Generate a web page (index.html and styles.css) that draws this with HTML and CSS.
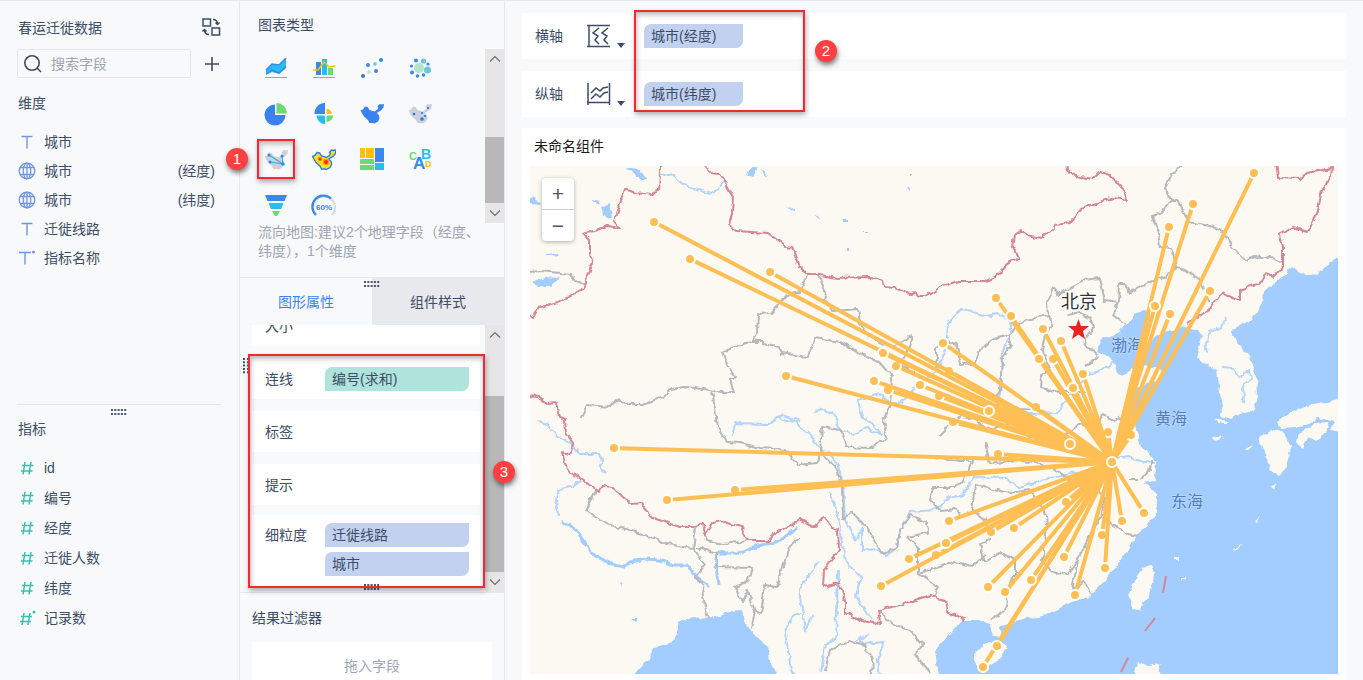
FILE: index.html
```html
<!DOCTYPE html>
<html lang="zh-CN">
<head>
<meta charset="utf-8">
<title>春运迁徙数据</title>
<link rel="stylesheet" href="styles.css">
</head>
<body>
<svg class="defs" aria-hidden="true">
  <symbol id="i-text" viewBox="0 0 18 18"><path d="M3.500 3.500h11M9 3.500v12" fill="none" stroke="#6f96e0" stroke-width="1.400"/></symbol>
  <symbol id="i-textstar" viewBox="0 0 18 18"><path d="M1 3.500h12M7 3.500v12" fill="none" stroke="#6f96e0" stroke-width="1.400"/><circle cx="15.500" cy="3" r="1.500" fill="#6f96e0"/></symbol>
  <symbol id="i-globe" viewBox="0 0 18 18"><g fill="none" stroke="#6f96e0" stroke-width="1.300"><circle cx="9" cy="9" r="7.800"/><ellipse cx="9" cy="9" rx="3.800" ry="7.800"/><path d="M9 1v16M2 5.500h14M2 12.500h14"/></g></symbol>
  <symbol id="i-hash" viewBox="0 0 18 18"><path d="M7 3 5 15.500M13 3l-2 12.500M4 6.500h11.500M3 12h11.500" fill="none" stroke="#3fbfae" stroke-width="1.500"/></symbol>
  <symbol id="i-hashstar" viewBox="0 0 18 18"><path d="M6 4 4 16M12 4l-2 12M3 7.500h11M2 12.500h11" fill="none" stroke="#3fbfae" stroke-width="1.500"/><circle cx="16" cy="3" r="1.500" fill="#3fbfae"/></symbol>
  <symbol id="i-grip" viewBox="0 0 16 6"><path d="M0 1h16M0 5h16" stroke="#4a5670" stroke-width="2" stroke-dasharray="2 1.300"/></symbol>
  <symbol id="i-up" viewBox="0 0 12 8"><path d="M1 6.500 6 1.500l5 5" fill="none" stroke="#6c6c6c" stroke-width="1.100"/></symbol>
  <symbol id="i-down" viewBox="0 0 12 8"><path d="M1 1.500 6 6.500l5-5" fill="none" stroke="#6c6c6c" stroke-width="1.100"/></symbol>
  <symbol id="i-china" viewBox="0 0 24 24"><path d="M0.500 8.500 3 7.500 5 4.500 7.500 5 9.500 8l5 1.500 3-2 1-2-1-1 2-2.500 2 .5L24 2l-.5 3.500-2.500 3-3 1.500-1 1 2 2.500.5 3-1.500 3-3.500 2-1.500-.5-3.500 0-1.500-3L4 14.500 2.500 12z"/></symbol>
</svg>
<div class="app">
  <aside class="fields">
    <header class="fields-head">
      <h1 class="title">春运迁徙数据</h1>
      <button class="plain" aria-label="切换数据"><svg width="20" height="20" viewBox="0 0 20 20" fill="none" stroke="#3d4d66" stroke-width="1.500"><path d="M2 1h7.500v7H2zM11 10h7.500v7H11zM12 1.500c3 0 4.500 1.500 4.500 5M14.500 4.500l2 2 2-2M8 16.500c-3 0-4.500-1.500-4.500-5M1.500 13.500l2-2 2 2"/></svg></button>
    </header>
    <div class="search-row">
      <label class="search"><svg width="20" height="20" viewBox="0 0 20 20" fill="none" stroke="#3d4d66" stroke-width="1.600"><circle cx="9" cy="9" r="7.200"/><path d="m14 14 4 4"/></svg><input type="text" placeholder="搜索字段" aria-label="搜索字段"></label>
      <button class="plain" aria-label="添加字段"><svg width="16" height="16" viewBox="0 0 16 16" stroke="#3d4d66" stroke-width="1.600"><path d="M1 8h14M8 1v14"/></svg></button>
    </div>
    <section class="dims">
      <h2 class="title">维度</h2>
      <ul class="list">
        <li><svg class="ic"><use href="#i-text"/></svg>城市</li>
        <li><svg class="ic"><use href="#i-globe"/></svg>城市<span class="geo">(经度)</span></li>
        <li><svg class="ic"><use href="#i-globe"/></svg>城市<span class="geo">(纬度)</span></li>
        <li><svg class="ic"><use href="#i-text"/></svg>迁徙线路</li>
        <li><svg class="ic"><use href="#i-textstar"/></svg>指标名称</li>
      </ul>
    </section>
    <section class="measures">
      <svg class="grip" width="16" height="6"><use href="#i-grip"/></svg>
      <h2 class="title">指标</h2>
      <ul class="list tall">
        <li><svg class="ic"><use href="#i-hash"/></svg>id</li>
        <li><svg class="ic"><use href="#i-hash"/></svg>编号</li>
        <li><svg class="ic"><use href="#i-hash"/></svg>经度</li>
        <li><svg class="ic"><use href="#i-hash"/></svg>迁徙人数</li>
        <li><svg class="ic"><use href="#i-hash"/></svg>纬度</li>
        <li><svg class="ic"><use href="#i-hashstar"/></svg>记录数</li>
      </ul>
    </section>
  </aside>

  <section class="config">
    <h2 class="title chart-title">图表类型</h2>
    <div class="types">
      <div class="type-grid">
        <button class="type" aria-label="面积图"><svg viewBox="0 0 24 24"><path d="M2 14 8 8l7 1 7-7v10l-7 6-7-2-6 3z" fill="#27bdf0"/><path d="M2 14 8 8l7 1 7-7M2 18l6-4 7 3 7-6" fill="none" stroke="#3b87ea" stroke-width="1.500"/><path d="M1 21.500h22" stroke="#9aa3b2"/></svg></button>
        <button class="type" aria-label="组合图"><svg viewBox="0 0 24 24"><path d="M4 6h5v13H4z" fill="#3b87ea"/><path d="M10 3h5v16h-5z" fill="#27bdf0"/><path d="M16 12h5v7h-5z" fill="#6bd975"/><path d="M1 14h5l6-8 5 5 6-1" fill="none" stroke="#ffc000" stroke-width="1.500"/><path d="M1 21.500h22" stroke="#9aa3b2"/></svg></button>
        <button class="type" aria-label="散点图"><svg viewBox="0 0 24 24"><circle cx="3" cy="20" r="2" fill="#4472c4"/><circle cx="8" cy="9" r="2" fill="#3b87ea"/><circle cx="9" cy="16" r="1.700" fill="#b1e5cb"/><circle cx="15" cy="8" r="1.800" fill="#70c5d5"/><circle cx="16" cy="15" r="2" fill="#3b87ea"/><circle cx="21" cy="4" r="2" fill="#1d8fe6"/></svg></button>
        <button class="type" aria-label="气泡图"><svg viewBox="0 0 24 24"><circle cx="11" cy="12" r="5" fill="#b1e5cb"/><g fill="#70c5d5"><circle cx="15.500" cy="5" r="2.600"/><circle cx="19.500" cy="14" r="3.500"/></g><g fill="#3b87ea"><circle cx="8" cy="4.500" r="2"/><circle cx="20" cy="8" r="1.600"/><circle cx="3.500" cy="10" r="1.600"/><circle cx="4" cy="16.500" r="2"/><circle cx="9.500" cy="20" r="1.800"/><circle cx="15.500" cy="19" r="1.800"/></g></svg></button>
        <button class="type" aria-label="饼图"><svg viewBox="0 0 24 24"><path d="M11 2.500V13h10.500A10.500 10.500 0 1 1 11 2.500z" fill="#3983f0"/><path d="M12.500 1v10.500H23A10.500 10.500 0 0 0 12.500 1z" fill="#6bd975"/></svg></button>
        <button class="type" aria-label="玫瑰图"><svg viewBox="0 0 24 24"><path d="M13 1v11H2.500A10.500 10.500 0 0 1 13 1z" fill="#3b87ea"/><path d="M14.500 7v5h5.500a5.500 5.500 0 0 0-5.500-5z" fill="#ffc000"/><path d="M13 13.500V22a9 9 0 0 1-8.500-8.500z" fill="#27bdf0"/><path d="M14.500 13.500V20a6.500 6.500 0 0 0 6.500-6.500z" fill="#6bd975"/></svg></button>
        <button class="type" aria-label="区域地图"><svg viewBox="0 0 24 24"><use href="#i-china" fill="#3983f0"/></svg></button>
        <button class="type" aria-label="点地图"><svg viewBox="0 0 24 24"><use href="#i-china" fill="#cbd0da"/><g fill="#2578e8"><circle cx="6" cy="12" r="1.300"/><circle cx="14" cy="11" r="1.100"/><circle cx="20" cy="6" r="1.100"/><circle cx="17" cy="14" r="1.100"/><circle cx="14" cy="17" r="1.700"/></g></svg></button>
        <button class="type picked" aria-label="流向地图"><svg viewBox="0 0 24 24"><use href="#i-china" fill="#cbd0da"/><path d="M5 7l14 9M6 14l13 2M18 8l1 8" fill="none" stroke="#27b7e6" stroke-width="1.200"/><g fill="#3b87ea"><circle cx="5" cy="7" r="1.500"/><circle cx="6" cy="14" r="1.500"/><circle cx="18" cy="8" r="1.500"/><circle cx="19" cy="16" r="1.800"/></g></svg><span class="mark mark-one"></span><span class="badge badge-one">1</span></button>
        <button class="type" aria-label="热力地图"><svg viewBox="0 0 24 24"><use href="#i-china" fill="#ffe11a" stroke="#2b80e8" stroke-width="1.400"/><circle cx="8" cy="11" r="2.400" fill="#ff9d00"/><circle cx="14" cy="14" r="3.200" fill="#ff9d00"/><circle cx="8" cy="11" r="1.300" fill="#f22"/><circle cx="14" cy="14" r="1.900" fill="#f22"/></svg></button>
        <button class="type" aria-label="矩形树图"><svg viewBox="0 0 24 24"><path d="M0 0h5v10H0zM6 0h8v10H6z" fill="#ffc000"/><path d="M15 0h9v14h-9z" fill="#3b87ea"/><path d="M0 11h14v5H0zM0 17h14v5H0z" fill="#6bd975"/><path d="M15 15h9v7h-9z" fill="#27bdf0"/></svg></button>
        <button class="type" aria-label="词云"><svg viewBox="0 0 24 24" font-family="Liberation Sans, sans-serif" font-weight="bold"><text x="1" y="12" font-size="11" fill="#6bd975">C</text><text x="13" y="11" font-size="14" fill="#27bdf0">B</text><text x="5" y="21" font-size="17" fill="#3b87ea">A</text><text x="17" y="19" font-size="9" fill="#ffc000">D</text></svg></button>
        <button class="type" aria-label="漏斗图"><svg viewBox="0 0 24 24"><path d="M1 1h22l-2.500 6h-17z" fill="#3b87ea"/><path d="M4.500 9h15L17 15H7z" fill="#27bdf0"/><path d="M8 17h8l-3 5h-2z" fill="#6bd975"/></svg></button>
        <button class="type" aria-label="仪表盘"><svg viewBox="0 0 24 24"><g fill="none" stroke-width="2.200"><path d="M4 21a11 11 0 1 1 16 0" stroke="#d9dce1"/><path d="M4 21A11 11 0 0 1 19 4.500" stroke="#3b87ea"/></g><text x="12" y="16" font-size="8" font-weight="bold" text-anchor="middle" fill="#3b87ea" font-family="Liberation Sans, sans-serif">60%</text></svg></button>
      </div>
      <div class="bar"><button aria-label="向上"><svg width="12" height="8"><use href="#i-up"/></svg></button><i class="space a"></i><i class="thumb b"></i><button aria-label="向下"><svg width="12" height="8"><use href="#i-down"/></svg></button></div>
    </div>
    <p class="hint">流向地图:建议2个地理字段（经度、纬度），1个维度</p>
    <div class="tabs" role="tablist">
      <button class="tab on" role="tab">图形属性</button><button class="tab" role="tab">组件样式</button>
      <svg class="tab-grip" width="16" height="6"><use href="#i-grip"/></svg>
    </div>
    <div class="props">
      <div class="prop-list">
        <div class="prop">大小</div>
        <div class="prop">连线<div class="chips"><span class="chip green">编号(求和)</span></div></div>
        <div class="prop">标签</div>
        <div class="prop">提示</div>
        <div class="prop fine">细粒度<div class="chips"><span class="chip">迁徙线路</span><span class="chip">城市</span></div></div>
      </div>
      <div class="bar"><button aria-label="向上"><svg width="12" height="8"><use href="#i-up"/></svg></button><i class="space c"></i><i class="thumb d"></i><button aria-label="向下"><svg width="12" height="8"><use href="#i-down"/></svg></button></div>
      <svg class="side-grip" width="6" height="16" viewBox="0 0 6 16"><path d="M1 0v16M5 0v16" stroke="#4a5670" stroke-width="2" stroke-dasharray="2 1.300"/></svg>
      <svg class="low-grip" width="16" height="6"><use href="#i-grip"/></svg>
      <span class="mark mark-three"></span><span class="badge badge-three">3</span>
    </div>
    <section class="filter">
      <h2 class="title">结果过滤器</h2>
      <div class="drop">拖入字段</div>
    </section>
  </section>

  <main class="stage">
    <div class="axes">
      <div class="axis">横轴<button class="plain axis-btn" aria-label="横轴设置"><svg width="40" height="24" viewBox="0 0 40 24"><path d="M0 1.500h23M0 22.500h23M2 1v22M12 4l-6 5 5 3-3 4 4 4M21 4l-6 5 5 3-3 4 4 4" fill="none" stroke="#3d4d66" stroke-width="1.500"/><path d="M30 19h8l-4 5z" fill="#3d4d66"/></svg></button><span class="chip">城市(经度)</span></div>
      <div class="axis">纵轴<button class="plain axis-btn" aria-label="纵轴设置"><svg width="40" height="24" viewBox="0 0 40 24"><path d="M1 1v22M22.500 1v22M0 20.500h23M4 11l5-5 4 3 3-3 5-1M4 17l5-5 4 3 4-4 4-1" fill="none" stroke="#3d4d66" stroke-width="1.500"/><path d="M30 19h8l-4 5z" fill="#3d4d66"/></svg></button><span class="chip">城市(纬度)</span></div>
      <span class="mark mark-two"></span><span class="badge badge-two">2</span>
    </div>
    <section class="card">
      <h2 class="card-title">未命名组件</h2>
      <div class="map">
        <svg class="canvas" viewBox="530 166 808 508" preserveAspectRatio="xMidYMid slice" role="img" aria-label="迁徙流向地图">
          <defs><filter id="rough" x="530" y="166" width="808" height="508" filterUnits="userSpaceOnUse"><feTurbulence type="fractalNoise" baseFrequency="0.130" numOctaves="2" seed="4"/><feDisplacementMap in="SourceGraphic" scale="6" xChannelSelector="R" yChannelSelector="G"/></filter></defs>
          <rect x="530" y="166" width="808" height="508" fill="#fcf9f2"/>
          <g filter="url(#rough)">
            <g fill="#a3ccff">
              <path d="M1350 250 1338 257 1327 265 1318 274 1307 275 1298 271 1292 266 1288 273 1274 283 1263 292 1262 303 1250 320 1231 332 1237 343 1247 353 1257 377 1258 397 1253 411 1240 414 1230 419 1220 416 1223 405 1220 393 1217 370 1203 362 1196 357 1202 337 1197 330 1183 328 1163 332 1148 342 1137 348 1135 344 1142 337 1150 327 1150 310 1137 313 1120 332 1100 340 1097 352 1113 360 1117 373 1125 375 1137 363 1163 370 1160 378 1137 388 1131 397 1124 407 1130 413 1138 435 1141 447 1150 453 1156 462 1155 480 1145 483 1156 493 1157 510 1152 520 1138 535 1130 545 1120 563 1103 582 1087 597 1070 603 1056 610 1040 617 1027 618 1000 627 1002 638 993 637 989 623 980 620 963 620 947 637 935 650 937 664 942 690H1350z"/>
              <path d="M625 684 647 660 655 647 670 643 678 633 678 622 693 617 708 619 733 612 743 610 745 623 757 638 768 647 770 660 782 684z"/>
              <path d="M625 167 636 169 648 179 640 179zM592 200 600 202 599 204 592 203zM602 206 610 204 612 217 604 216zM530 198 542 202 541 204 530 203zM532 282 545 277 559 278 550 286 538 286zM544 255 558 254 560 256 550 257zM747 175 751 166 759 168 754 177zM761 170 765 170 768 179zM786 209 796 208 796 211zM814 214 819 218 818 220zM907 188 910 188 910 191zM843 220h3v2h-3zM863 231h5v1h-5zM848 248h2v3h-2zM910 173h2v2h-2zM631 618 638 618 636 621zM619 583 623 582 621 586z"/>
            </g>
            <g fill="#fcf9f2">
              <path d="M975 653 984 644 999 642 1007 646 1002 658 986 668 975 664zM1149 566 1155 571 1152 583 1148 598 1142 603 1140 612 1133 608 1129 594 1134 580 1142 569zM1135 674 1138 662 1148 665 1158 663 1161 674 1160 684H1135z"/>
              <path d="M1259 437 1266 435 1275 429 1283 433 1292 446 1289 455 1285 470 1280 475 1270 471 1268 461 1262 448zM1298 435 1306 429 1317 423 1327 422 1329 428 1324 436 1314 440 1308 438 1303 448 1297 444zM1277 422 1285 417 1294 411 1306 406 1318 403 1328 402 1337 399 1350 397V433L1330 430 1335 422 1318 418 1308 424 1296 427 1280 428zM1212 438 1220 435 1223 437 1217 441zM1246 450 1253 444 1250 450zM1271 487 1277 483 1275 490zM1255 522 1261 517 1257 523zM1233 551 1242 544 1238 549zM1176 557h3v3h-3zM1180 578h6v2h-6zM1214 420l8-1 6 4-10 0z"/>
            </g>
            <g class="river">
              <path d="M660 173 673 176 684 184 710 194 717 190 724 180"/><path d="M538 420 549 426 557 437 573 444 579 454 599 454 602 461 599 465 606 473"/><path d="M580 480 574 486 559 490 556 500 558 516"/><path d="M797 527 780 541 753 547 740 553 718 553 716 565 718 585" class="wide"/><path d="M562 521 577 531 591 553 613 565 624 567 630 562 647 559 659 560 675 565 687 565 697 577 710 587" class="wide"/>
              <path d="M732 436 735 423 770 424 778 418 795 422 812 436 820 450 833 455 840 472 843 485 845 520 855 540 862 530 862 551 880 550 886 556 897 548 900 530 910 512 935 510 950 497 963 494 974 477 1005 478 1020 488 1042 480 1070 474 1090 470 1110 460 1128 457 1140 461 1155 464"/>
              <path d="M815 412 825 410 834 414 840 430 853 434 867 428 882 436 872 423 862 418 858 400 880 393 888 404 902 402 918 385 936 372 946 350 948 324 961 309 972 311 985 316 998 314 1010 320 1010 335 1002 355 1000 395 1004 408 1030 414 1058 413 1066 400 1085 377 1115 363"/>
              <path d="M830 493 840 522 842 545 848 565 861 576 856 596 872 620M838 570 837 610 836 640 825 645 821 674M813 615 805 630 799 590 808 576 820 561M869 633 859 640 863 644 884 642 877 660 880 674"/><path d="M1225 319 1222 328 1210 332 1208 342 1204 346 1207 352M1222 367 1233 368 1240 378 1250 370 1252 378 1243 384 1244 403"/><path d="M800 614 795 614 785 632 790 665 794 674M775 418 782 415 800 421"/>
            </g>
            <g class="line">
              <path d="M582 419 587 405 610 407 617 399 627 404 643 404 663 397 668 391 687 387 710 390 720 392 734 392 730 380 736 377 727 365 722 352 752 341 758 332 759 314 771 313 787 295 800 292 807 276M752 341 763 341 763 344 780 348 782 353 808 357 815 338 840 342 860 353 880 363 892 377 890 407 883 420 887 438 870 448 847 447 840 430 822 427 820 452 818 463 797 465 787 450 760 448 740 443 727 442 717 427 715 407 712 392"/>
              <path d="M820 452 837 470 842 487 843 520 852 512 867 528 883 554 897 548 900 530 910 515 927 523 928 533 907 537 918 547 918 573 938 587 933 595M818 275 826 292 824 300 834 311 858 309 860 323 867 335 883 344 894 346 912 336 908 350 900 365 915 372"/>
              <path d="M936 372 936 349 946 342 957 345 960 365 975 362 980 350 992 340 1010 333 1010 345 1002 360 1000 390 995 405 1020 409 1035 410M1010 333 1025 320 1048 315 1047 302 1053 287 1058 294 1075 286 1084 280 1100 278 1105 300 1118 302M1048 315 1052 325 1045 335 1042 350 1050 367 1042 375 1041 388 1060 392 1085 392M1068 315 1078 312 1090 318 1094 328 1086 338 1085 347 1095 351 1098 358 1085 365"/>
              <path d="M1118 302 1119 284 1126 284 1130 293 1142 286 1165 276 1177 268 1176 260 1170 248 1160 247 1158 233 1152 216 1162 213 1171 200 1165 188 1172 175 1180 166M1171 200 1178 200 1188 222 1210 226 1225 232 1230 245 1245 260 1255 256 1270 258 1283 262M1177 268 1185 270 1200 280 1210 302M1118 302 1113 315 1126 325"/>
              <path d="M940 435 960 415 975 420 990 430 1000 425 1018 425 1030 437 1040 440 1065 436 1080 425 1095 430 1102 415 1115 420 1128 413M935 457 960 461 972 461 965 480 955 487 933 487 930 500 940 510 956 508 960 518 972 510 985 520 990 540 980 545 985 562 1000 553 1015 560 1015 575 1005 595 1008 605"/>
              <path d="M985 442 990 464 1015 460 1040 464 1055 470 1070 480 1095 485 1104 500 1102 515 1085 545 1078 560 1072 590 1084 580 1090 594M972 510 975 485 1010 493 1030 490 1045 510 1047 525 1043 560 1050 570 1066 575 1078 560M1102 515 1113 525 1128 534 1138 536M1140 480 1150 469 1152 460M1128 480 1138 480M918 573 940 567 955 562 972 566 985 556M878 610 895 626 910 630 923 645 915 655 930 672M825 672 830 650 850 640 864 645 873 660 872 674M1008 605 1000 614 990 620"/>
              <path d="M597 489 585 510 610 525 647 535 663 543 693 549 696 527M705 535 707 540 723 544 748 541M693 549 705 565 695 577 702 582 703 597 708 619M697 548 718 553 718 567 752 568 747 582 735 587 742 602 748 590 755 612 751 628M755 612 761 613 765 585 777 587 789 547 800 538M530 272 540 271 571 274 576 281 585 284"/>
            </g>
            <g class="line red">
              <path d="M660 160V170L659 190 650 195 636 193 625 189 614 221 619 228 607 226 597 230 583 234 589 240 589 253 594 263 587 275 585 288 573 294 558 303 538 308 533 318 528 314M701 162 710 172 720 173 724 180 733 197 732 213 729 225 737 231 768 233 785 246 793 247 800 267 807 275 820 275 837 278 870 277 882 281 884 286 895 287 909 293 917 292 919 297 925 297 943 286 958 281 985 281 995 277 1008 263 1019 257 1013 247 1015 235 1021 231 1030 236 1042 238 1053 230 1055 225 1070 223 1081 208 1100 202 1113 198 1127 200 1126 192 1110 175 1100 172 1093 179 1075 176 1068 172 1067 160"/>
              <path d="M1276 160 1278 178 1300 179 1307 173 1332 168 1331 175 1322 190 1318 210 1308 232 1292 227 1280 235 1283 247 1283 267 1273 277 1266 272 1260 283 1240 290 1240 300 1222 293 1210 308 1188 323"/>
              <path d="M526 396 538 397 547 403 557 402 560 418 565 420 566 433 573 443 570 455 562 452 567 470 580 478 599 492 602 486 612 487 632 505 640 504 653 518 680 527 693 527 703 523 705 535 712 523 722 521 730 524 741 527 748 541 768 541 778 531 792 525 800 519 815 527 824 517 832 528 838 530 839 550 824 570 823 587 839 583 845 600 845 613 862 621 880 624 878 610 900 605 930 595 948 603 947 612 965 620"/>
            </g>
          </g>
          <path class="line red" d="M1166 576 1163 593M1155 618 1145 631M1128 658 1121 672"/>
          <g class="sea"><text x="1127" y="351">渤海</text><text x="1171" y="424">黄海</text><text x="1187" y="507">东海</text></g>
          <g id="routes"></g>
          <text class="capital" x="1079" y="308">北京</text>
          <path d="M1078.500 319 1081 326h8l-6 5 2 8-6.500-4.500L1072 339l2-8-6-5h8z" fill="#e8251f"/>
        </svg>
        <div class="zoom"><button aria-label="放大">+</button><button aria-label="缩小">−</button></div>
      </div>
    </section>
  </main>
</div>
<script src="map.js"></script>
</body>
</html>
```

FILE: styles.css
```css
* { box-sizing: border-box; }
body { margin: 0; background: #f7f9fb; color: #3d4d66; font: 14px/20px "Liberation Sans", "Noto Sans CJK SC", sans-serif; overflow: hidden; }
button, input { font: inherit; color: inherit; border: 0; background: none; padding: 0; margin: 0; }
h1, h2, p, ul { margin: 0; padding: 0; font: inherit; list-style: none; }
svg { display: block; flex: none; }
.defs { position: absolute; width: 0; height: 0; }
.plain { display: flex; }

.app { display: flex; height: 100vh; border-top: 1px solid #e6e8ec; }

.fields { width: 240px; flex: none; display: flex; flex-direction: column; border-right: 1px solid #e6e8ec; padding: 15px 18px 0 17px; }
.fields-head { display: flex; justify-content: space-between; align-items: center; height: 24px; }
.fields .title { padding-left: 1px; }
.search-row { display: flex; align-items: center; justify-content: space-between; margin-top: 9px; padding-right: 1px; }
.search { display: flex; align-items: center; gap: 8px; width: 174px; height: 29px; padding-left: 5px; border: 1px solid #e3e6ea; border-radius: 2px; }
.search input { width: 120px; outline: 0; }
.search input::placeholder { color: #9da5b3; opacity: 1; }
.dims { margin-top: 15px; flex: 1; }
.list { margin-top: 14px; }
.list li { display: flex; align-items: center; height: 29px; padding-left: 1px; gap: 8px; }
.list.tall { margin-top: 14px; }
.list.tall li { height: 30px; }
.ic { width: 18px; height: 18px; }
.geo { margin-left: auto; padding-right: 6px; }
.measures { position: relative; height: 276px; border-top: 1px solid #e3e6ea; padding-top: 14px; }
.grip { position: absolute; top: 4px; left: 94px; }

.config { width: 265px; flex: none; display: flex; flex-direction: column; border-right: 1px solid #e6e8ec; }
.config > * { flex: none; }
.chart-title { padding: 14px 18px; }
.types { display: flex; justify-content: space-between; height: 174px; }
.type-grid { display: grid; grid-template-columns: repeat(4, 24px); grid-auto-rows: 24px; gap: 22px 24px; padding: 7px 0 0 24px; }
.type { position: relative; width: 24px; height: 24px; }
.type svg { overflow: visible; }
.bar { width: 19px; flex: none; display: flex; flex-direction: column; background: #e6e6e6; }
.bar button { height: 20px; display: flex; align-items: center; justify-content: center; }
.thumb { background: #b8b8b8; }
.a { flex: 68; } .b { flex: 66; } .c { flex: 51; } .d { flex: 176; }
.hint { padding: 0 18px; height: 54px; color: #9da5b3; line-height: 19px; }
.tabs { position: relative; display: flex; height: 48px; border-top: 1px solid #e6e8ec; }
.tab { flex: 1; background: #e8e9ed; }
.tab.on { background: #f7f9fb; color: #3685f2; }
.tab-grip { position: absolute; top: 3px; left: 124px; }
.props { position: relative; display: flex; justify-content: space-between; height: 268px; border-bottom: 1px solid #e6e8ec; }
.prop-list { width: 240px; padding: 0 0 5px 12px; display: flex; flex-direction: column; justify-content: flex-end; gap: 12px; overflow: hidden; }
.prop { flex: none; display: flex; align-items: center; width: 228px; min-height: 41px; padding-left: 13px; background: #fff; }
.prop.fine { align-items: flex-start; min-height: 72px; padding-top: 8px; line-height: 24px; margin-top: -2px; }
.chips { display: flex; flex-direction: column; gap: 5px; width: 144px; margin-left: auto; margin-right: 11px; }
.chip { display: block; height: 24px; padding: 0 7px; line-height: 24px; background: #c2d1ef; border-radius: 7px 0; }
.chip.green { background: #afe3dc; }
.side-grip { position: absolute; left: 3px; top: 33px; }
.low-grip { position: absolute; left: 124px; top: 259px; }
.filter { padding: 15px 12px 0; }
.drop { margin-top: 14px; height: 60px; padding-top: 14px; background: #fff; text-align: center; color: #9da5b3; }

.stage { flex: 1; min-width: 0; display: flex; flex-direction: column; gap: 11px; padding: 12px 17px 0; }
.axes { position: relative; display: flex; flex-direction: column; gap: 12px; }
.axis { display: flex; align-items: center; height: 46px; padding-left: 13px; background: #fff; }
.axis-btn { margin: 0 17px 0 24px; }
.axis .chip { width: 99px; }
.card { flex: 1; min-height: 0; display: flex; flex-direction: column; padding: 8px 8px 6px; background: #fff; }
.card-title { padding: 0 4px 10px; color: #1a1a1a; }
.map { position: relative; flex: 1; min-height: 0; }
.canvas { width: 100%; height: 100%; }
.line { fill: none; stroke: #b6b8bb; stroke-width: 2px; stroke-linejoin: round; }
.line.red { stroke: #d58795; stroke-width: 2px; }
.river { fill: none; stroke: #b4d5fb; stroke-width: 2px; }
.river .wide { stroke: #a3ccff; stroke-width: 3px; }
.sea { fill: #4f7fc0; font-size: 16px; text-anchor: middle; stroke: #b8d6fb; stroke-width: 2px; paint-order: stroke; }
.capital { fill: #333; font-size: 18px; text-anchor: middle; stroke: #fff; stroke-width: 3px; paint-order: stroke; }
.route { stroke: #ffbf54; stroke-width: 4px; }
.stop { fill: #ffbf54; stroke: #fff; stroke-width: 2px; }
.zoom { position: absolute; left: 12px; top: 12px; width: 32px; display: flex; flex-direction: column; background: #fff; border-radius: 4px; box-shadow: 0 1px 4px rgba(0, 0, 0, .3); }
.zoom button { height: 31px; font-size: 21px; line-height: 31px; color: #555; }
.zoom button + button { height: 32px; border-top: 1px solid #ccc; }

.mark { position: absolute; border: 2px solid #f8262e; box-shadow: 1px 3px 5px rgba(0, 0, 0, .3), inset 1px 3px 5px rgba(0, 0, 0, .25); pointer-events: none; }
.badge { position: absolute; z-index: 2; width: 22px; height: 22px; border-radius: 50%; background: #ff4043; color: #fff; font-size: 15px; line-height: 22px; text-align: center; box-shadow: 1px 3px 5px rgba(0, 0, 0, .5); }
.mark-one { left: -7px; top: -9px; width: 38px; height: 40px; }
.badge-one { left: -38px; top: 0; }
.mark-two { left: 112px; top: -3px; width: 171px; height: 102px; }
.badge-two { left: 293px; top: 27px; }
.mark-three { left: 8px; top: 29px; width: 237px; height: 234px; }
.badge-three { left: 253px; top: 136px; }
```

FILE: map.js
```javascript
const hub = [1112, 462];
const stops = [
  [654, 222], [690, 259], [770, 272], [786, 376], [614, 448], [667, 500], [735, 490],
  [883, 353], [896, 366], [874, 381], [888, 390], [920, 385], [939, 396], [943, 343],
  [949, 371], [989, 411], [1036, 407], [996, 298], [1011, 316], [1043, 329], [1061, 341],
  [1039, 359], [1053, 359], [1073, 388], [1083, 374], [1108, 432], [1131, 435],
  [953, 422], [998, 454], [949, 521], [909, 559], [936, 555], [946, 543], [881, 586],
  [991, 532], [1014, 528], [988, 587], [1005, 592], [1031, 580], [997, 646], [983, 667],
  [1064, 557], [1066, 502], [1083, 485], [1102, 535], [1105, 568], [1075, 595], [1122, 521],
  [1144, 513], [1155, 306], [1170, 314], [1169, 227], [1193, 204], [1254, 173], [1210, 291],
  [1070, 444]
];
const layer = document.getElementById("routes");
function add(tag, attrs) {
  const node = document.createElementNS("http://www.w3.org/2000/svg", tag);
  for (const key in attrs) node.setAttribute(key, attrs[key]);
  layer.appendChild(node);
}
function dot(x, y) {
  add("circle", { class: "stop", cx: x, cy: y, r: 5 });
}
stops.forEach(([x, y]) => dot(x, y));
stops.forEach(([x, y]) => {
  const dx = hub[0] - x, dy = hub[1] - y, len = Math.hypot(dx, dy);
  add("line", { class: "route", x1: x + dx / len * 6, y1: y + dy / len * 6, x2: hub[0], y2: hub[1] });
});
[[883, 353], [943, 343], [1011, 316], [1039, 359], [1073, 388], [1155, 306], [1070, 444], [989, 411], [946, 543], [997, 646], [1031, 580], hub].forEach(([x, y]) => dot(x, y));
```
